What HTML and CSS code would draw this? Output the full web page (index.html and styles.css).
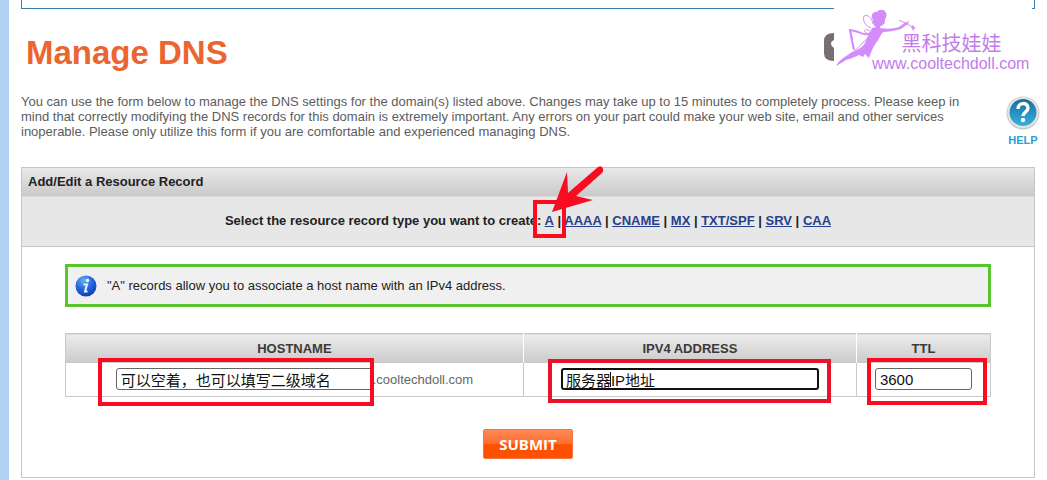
FILE: index.html
```html
<!DOCTYPE html>
<html lang="en">
<head>
<meta charset="utf-8">
<title>Manage DNS</title>
<link rel="stylesheet" href="styles.css">
</head>
<body>
<main class="page">
  <div class="previous-panel"></div>
  <div class="brand">
    <svg class="fairy" viewBox="0 0 82 60" aria-hidden="true">
      <path class="tab" d="M0 24q-10 0-10 8v12q0 8 10 8v-13q-3-2-3-4 0-3 3-4z"/>
      <path class="fill" d="M39 11C36 7 39 2 43 3 45 0 51 0 52 4 54 8 50 10 51 13 50 17 46 16 46 19 53 20 59 20 65 18L72 13 75 14 67 20C60 22 54 23 49 23 46 26 45 31 42 34 39 38 37 43 35 49L31 45 29 48 25 46C18 50 12 50 9 53L2 57C5 51 11 48 15 45 20 41 27 41 31 34 33 29 34 26 36 23L38 19 42 18C39 16 39 14 39 11Z"/>
      <path class="wing" d="M37 19C32 17 28 12 30 7 34 5 38 9 39 15M36 22C30 18 29 24 33 24M34 29C27 34 24 41 20 41 17 38 20 29 16 21" />
      <path class="limb" d="M36 24C30 28 27 22 16 21 17 27 18 33 20 40"/>
      <path class="wing" d="M65 11L79 18M69 18L75 12"/>
      <path class="fill" d="M79 16l1 2 2 0-2 2 0 2-2-2-1-2z"/>
    </svg>
    <div class="brand-text">
      <span class="brand-name" lang="zh-CN">黑科技娃娃</span>
      <span class="brand-url">www.cooltechdoll.com</span>
    </div>
  </div>
  <h1>Manage DNS</h1>
  <section class="intro">
    <p>You can use the form below to manage the DNS settings for the domain(s) listed above. Changes may take up to 15 minutes to completely process. Please keep in<br>mind that correctly modifying the DNS records for this domain is extremely important. Any errors on your part could make your web site, email and other services<br>inoperable. Please only utilize this form if you are comfortable and experienced managing DNS.</p>
    <a class="help" href="#help">
      <svg viewBox="0 0 34 34" aria-hidden="true">
        <defs><linearGradient id="helpBlue" x2="0" y2="1"><stop stop-color="#196e9e"/><stop offset="1" stop-color="#35b2dc"/></linearGradient></defs>
        <circle cx="17" cy="17" r="16.5" fill="#c9c9c9"/>
        <circle cx="17" cy="16.500" r="15.500" fill="#e4e4e4"/>
        <circle cx="17" cy="16.500" r="13.500" fill="url(#helpBlue)"/>
        <path d="M12 13c0-7 10-7 10-1 0 4-5 4-5 8" fill="none" stroke="#fff" stroke-width="3.500"/>
        <circle cx="17" cy="24" r="2.200" fill="#fff"/>
      </svg>
      <span>HELP</span>
    </a>
  </section>
  <form class="record-panel">
    <h2>Add/Edit a Resource Record</h2>
    <nav class="types">Select the resource record type you want to create: <span class="picked"><a href="#a">A</a><svg class="arrow" viewBox="0 0 60 50" aria-hidden="true"><path d="M5 46L20 6 21 27 51 1Q55-1 56 3 57 5 55 7L29 30 46 34Z"/></svg></span> | <a href="#aaaa">AAAA</a> | <a href="#cname">CNAME</a> | <a href="#mx">MX</a> | <a href="#txt">TXT/SPF</a> | <a href="#srv">SRV</a> | <a href="#caa">CAA</a></nav>
    <div class="panel-body">
      <div class="notice">
        <svg viewBox="0 0 22 22" aria-hidden="true">
          <defs><radialGradient id="infoBlue" cx=".4" cy=".25" r=".8"><stop stop-color="#6caef0"/><stop offset=".5" stop-color="#2468dc"/><stop offset="1" stop-color="#1238b0"/></radialGradient></defs>
          <circle cx="11" cy="11" r="10.500" fill="url(#infoBlue)"/>
          <circle cx="12.500" cy="5.500" r="1.800" fill="#e6f2ff"/>
          <path d="M8.500 9.500h3.500l-2 7h2.500" fill="none" stroke="#e6f2ff" stroke-width="2"/>
        </svg>
        <span>"A" records allow you to associate a host name with an IPv4 address.</span>
      </div>
      <table>
        <colgroup><col class="col-host"><col class="col-address"><col class="col-ttl"></colgroup>
        <thead><tr>
          <th scope="col"><label for="host">HOSTNAME</label></th>
          <th scope="col"><label for="address">IPV4 ADDRESS</label></th>
          <th scope="col"><label for="ttl">TTL</label></th>
        </tr></thead>
        <tbody><tr>
          <td><div class="field"><span class="mark mark-host"><input id="host" class="host" type="text" value="可以空着，也可以填写二级域名"></span><span>.cooltechdoll.com</span></div></td>
          <td><div class="field"><span class="mark mark-address"><input id="address" class="address" type="text" value="服务器IP地址"><i class="caret"></i></span></div></td>
          <td><div class="field"><span class="mark mark-ttl"><input id="ttl" class="ttl" type="text" value="3600"></span></div></td>
        </tr></tbody>
      </table>
      <button class="submit" type="submit">SUBMIT</button>
    </div>
  </form>
</main>
</body>
</html>
```
FILE: styles.css
```css
* { box-sizing: border-box; }

body {
  margin: 0;
  background: #fff;
  color: #222;
  font: 13px/15px "Liberation Sans", "Noto Sans CJK SC", sans-serif;
}

.page {
  position: relative;
  min-height: 100vh;
  overflow: hidden;
  border-left: 9px solid #b2d3f6;
  padding: 0 12px;
}

.previous-panel {
  height: 9px;
  border: 1px solid #3a7cae;
  border-top: 0;
}

/* Brand overlay in the top right corner */
.brand {
  position: absolute;
  top: 0;
  right: 15px;
  display: flex;
  width: 198px;
  height: 75px;
  padding-top: 9px;
  background: #fff;
  color: #c47bec;
}

.fairy {
  width: 82px;
  height: 60px;
  flex: none;
  overflow: visible;
}

.fairy .fill { fill: #d48cfa; }
.fairy .tab { fill: #777071; }
.fairy .wing { fill: none; stroke: #d48cfa; stroke-width: 1; }
.fairy .limb { fill: none; stroke: #d48cfa; stroke-width: 2; }

.brand-text {
  display: flex;
  flex-direction: column;
  align-items: flex-end;
  margin-left: -44px;
  padding-top: 24px;
  white-space: nowrap;
}

.brand-name {
  margin-right: 28px;
  font: 20px/20px "Noto Sans CJK SC", sans-serif;
}

.brand-url { font-size: 16px; line-height: 22px; }

h1 {
  margin: 24px 0 0 5px;
  color: #eb6530;
  font-size: 33px;
  line-height: 40px;
}

.intro {
  display: flex;
  justify-content: space-between;
  align-items: flex-start;
  margin: 21px -5px 0 0;
  color: #5c5c5c;
}

.intro p { margin: 0; white-space: nowrap; }

.help {
  display: flex;
  flex-direction: column;
  align-items: center;
  margin-top: 2px;
  color: #2a9fd0;
  font-size: 11px;
  font-weight: bold;
  text-decoration: none;
}

.help svg { width: 34px; height: 34px; }
.help span { margin-top: 3px; }

.record-panel {
  margin-top: 19px;
  border: 1px solid #c5c5c5;
}

h2 {
  margin: 0;
  padding: 6px;
  background: linear-gradient(#e9e9e9, #c9c9c9);
  font-size: 13px;
  line-height: 16px;
}

.types {
  padding: 16px 0 18px;
  border-top: 1px solid #d9d9d9;
  border-bottom: 1px solid #c5c5c5;
  background: #e7e7e7;
  font-weight: bold;
  text-align: center;
}

.types a { color: #27408b; }

.picked, .mark { position: relative; }

.picked::after {
  content: "";
  position: absolute;
  inset: -13px -12px -10px;
  border: 4px solid #f90b20;
  pointer-events: none;
}

.arrow {
  position: absolute;
  left: 2px;
  bottom: 12px;
  z-index: 1;
  width: 60px;
  height: 50px;
  overflow: visible;
  fill: #f90b20;
  pointer-events: none;
}

.panel-body { padding: 17px 43px; }

.notice {
  display: flex;
  align-items: center;
  gap: 10px;
  height: 43px;
  padding: 0 7px;
  border: 3px solid #57c52d;
  background: #f0f0f0;
}

.notice svg { width: 22px; height: 22px; }

table {
  width: 100%;
  margin-top: 26px;
  border-collapse: collapse;
  table-layout: fixed;
}

.col-host { width: 49.5%; }
.col-address { width: 36%; }

th {
  height: 29px;
  padding: 0;
  border: 1px solid #c9c9c9;
  border-right-color: #fff;
  border-bottom: 0;
  background: linear-gradient(#ececec, #cacaca);
  color: #3a3a3a;
}

th:last-child { border-right-color: #c9c9c9; }

td {
  height: 34px;
  padding: 0;
  border: 1px solid #c9c9c9;
  border-top: 0;
}

.field {
  display: flex;
  justify-content: center;
  align-items: center;
  color: #666;
}

.mark { display: flex; }

.mark::after {
  content: "";
  position: absolute;
  border: 4px solid #f90b20;
  pointer-events: none;
}

.mark-host::after { inset: -10px -1px -16px -18px; }
.mark-address::after { inset: -9px -12px -13px -13px; border-color: #e8142a; }
.mark-ttl::after { inset: -10px -15px -15px -8px; }

input {
  height: 22px;
  padding: 0 4px;
  border: 1px solid #666;
  border-radius: 3px;
  background: #fff;
  color: #111;
  font: 15px/20px "Liberation Sans", "Noto Sans CJK SC", sans-serif;
}

.host { width: 257px; }
.address { width: 258px; padding: 0 3px; border: 2px solid #111; }
.ttl { width: 97px; }

.caret {
  position: absolute;
  top: 4px;
  left: 49px;
  width: 1px;
  height: 15px;
  background: #111;
}

.submit {
  display: block;
  height: 30px;
  margin: 32px auto 1px;
  padding: 0 15px;
  border: 1px solid #f0743f;
  border-radius: 2px;
  background: linear-gradient(#ff8a55, #ff6d2e 50%, #fd5000 52%, #fd5000);
  color: #fff;
  font: bold 15px/26px "Open Sans", sans-serif;
}
```
